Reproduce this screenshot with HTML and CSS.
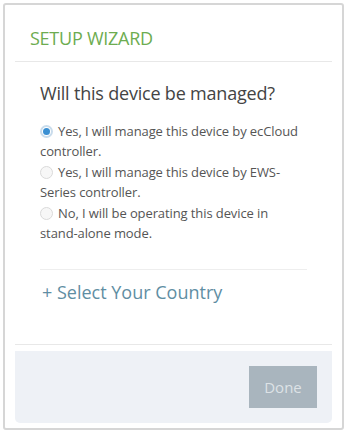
FILE: index.html
```html
<!DOCTYPE html>
<html>
<head>
<meta charset="utf-8">
<link rel="stylesheet" href="styles.css">
</head>
<body>
<div class="frame">
  <div class="header"><h1 class="title">SETUP WIZARD</h1></div>
  <div class="content">
    <h2 class="question">Will this device be managed?</h2>
    <div class="options">
      <label class="option"><span class="radio checked"></span>Yes, I will manage this device by ecCloud controller.</label>
      <label class="option"><span class="radio"></span>Yes, I will manage this device by EWS-Series controller.</label>
      <label class="option"><span class="radio"></span>No, I will be operating this device in stand-alone mode.</label>
    </div>
    <div class="country">+ Select Your Country</div>
  </div>
  <div class="footer"><button class="done">Done</button></div>
</div>
</body>
</html>
```
FILE: styles.css
```css
html, body {
  margin: 0;
  padding: 0;
  background: #ffffff;
}
body {
  font-family: "Open Sans", "DejaVu Sans", sans-serif;
}
.frame {
  margin: 3px;
  border: 2px solid #d6d6d6;
  border-radius: 3px;
  padding: 0 10px 5px;
  background: #fff;
}
.header {
  padding: 21px 15px 11px;
  border-bottom: 1px solid #e8e8e8;
}
.title {
  margin: 0;
  font-size: 18px;
  line-height: 24px;
  font-weight: 400;
  letter-spacing: -0.25px;
  color: #6dac50;
}
.content {
  padding: 18px 25px 39px;
  border-bottom: 1px solid #e8e8e8;
}
.question {
  margin: 0 0 15px;
  font-size: 18px;
  line-height: 26px;
  font-weight: 400;
  letter-spacing: -0.2px;
  color: #444;
}
.options {
  display: flex;
  flex-direction: column;
  gap: 1px;
  padding-right: 6px;
}
.option {
  display: block;
  font-size: 13px;
  line-height: 20px;
  letter-spacing: -0.1px;
  color: #555;
}
.radio {
  display: inline-block;
  box-sizing: border-box;
  width: 13px;
  height: 13px;
  border-radius: 50%;
  border: 1px solid #dadada;
  background: #f7f7f7;
  margin-right: 5px;
  vertical-align: -2px;
  position: relative;
}
.radio.checked {
  border: 2px solid #c9dcec;
  background: #fff;
}
.radio.checked::after {
  content: "";
  position: absolute;
  left: 1px;
  top: 1px;
  width: 7px;
  height: 7px;
  border-radius: 50%;
  background: #3a8fd2;
}
.country {
  margin-top: 26px;
  border-top: 1px solid #eeeeee;
  padding: 9px 0 0 2px;
  font-size: 18px;
  line-height: 26px;
  color: #5f8ea3;
}
.footer {
  margin-top: 6px;
  background: #eef1f6;
  border-radius: 0 0 5px 5px;
  padding: 15px;
  display: flex;
  justify-content: flex-end;
}
.done {
  width: 68px;
  height: 42px;
  border: none;
  border-radius: 0;
  background: #a9b5be;
  color: #dde2e6;
  font-family: "Open Sans", "DejaVu Sans", sans-serif;
  font-size: 15px;
  padding: 0;
}
```
